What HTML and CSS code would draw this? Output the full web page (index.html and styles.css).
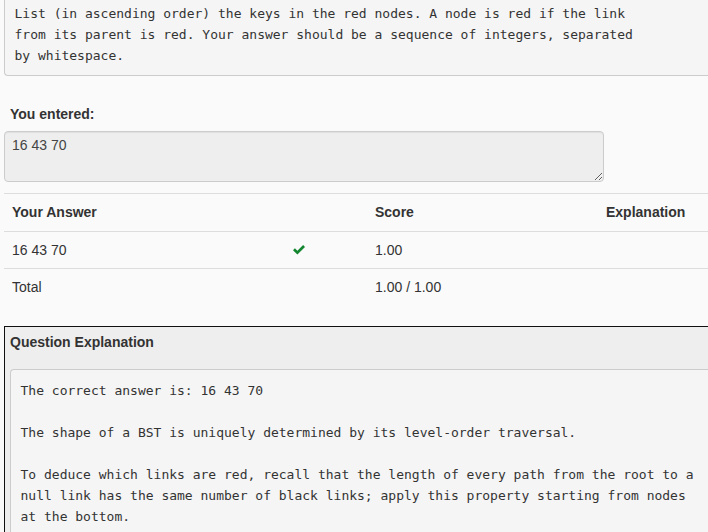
FILE: index.html
```html
<!DOCTYPE html>
<html>
<head>
<meta charset="utf-8">
<link rel="stylesheet" href="styles.css">
</head>
<body>
<div class="page">
<pre class="prompt">List (in ascending order) the keys in the red nodes. A node is red if the link
from its parent is red. Your answer should be a sequence of integers, separated
by whitespace.</pre>

<div class="entered">
  <label class="entered-label">You entered:</label>
  <textarea class="entered-box" readonly>16 43 70</textarea>
</div>

<table class="results">
  <colgroup>
    <col class="c-answer">
    <col class="c-mark">
    <col class="c-score">
    <col class="c-expl">
  </colgroup>
  <thead>
    <tr><th>Your Answer</th><th></th><th>Score</th><th>Explanation</th></tr>
  </thead>
  <tbody>
    <tr>
      <td>16 43 70</td>
      <td><svg class="check" width="12" height="10" viewBox="0 0 12 10"><polygon points="0,5.2 1.9,3.3 4.4,5.8 10.1,0.1 12,2 4.4,9.6" fill="#14862f"/></svg></td>
      <td>1.00</td>
      <td></td>
    </tr>
    <tr>
      <td>Total</td>
      <td></td>
      <td>1.00 / 1.00</td>
      <td></td>
    </tr>
  </tbody>
</table>

<div class="explain">
  <div class="explain-head">Question Explanation</div>
  <pre class="explain-body">The correct answer is: 16 43 70

The shape of a BST is uniquely determined by its level-order traversal.

To deduce which links are red, recall that the length of every path from the root to a
null link has the same number of black links; apply this property starting from nodes
at the bottom.</pre>
</div>
</div>
</body>
</html>
```

FILE: styles.css
```css
html, body {
  margin: 0;
  padding: 0;
  background: #fafafa;
  overflow: hidden;
}

body {
  width: 708px;
  height: 532px;
  font-family: "Liberation Sans", Arial, sans-serif;
  font-size: 14px;
  line-height: 20px;
  color: #333;
}

.page {
  padding-left: 4px;
}

.prompt {
  margin: -8px 0 0 0;
  padding: 9.5px;
  background: #f5f5f5;
  border: 1px solid #ccc;
  border-right: none;
  border-radius: 0 0 0 4px;
  font-family: "DejaVu Sans Mono", monospace;
  font-size: 13px;
  line-height: 21px;
  color: #333;
  white-space: pre;
  overflow: hidden;
}

.entered {
  display: flex;
  flex-direction: column;
  margin-top: 28px;
}

.entered-label {
  font-weight: bold;
  padding-left: 6px;
  margin-bottom: 7px;
}

.entered-box {
  box-sizing: border-box;
  width: 600px;
  height: 51px;
  margin: 0;
  padding: 3px 7px;
  border: 1px solid #ccc;
  border-radius: 4px;
  background: #eee;
  color: #444;
  font-family: "Liberation Sans", Arial, sans-serif;
  font-size: 14px;
  line-height: 20px;
  resize: vertical;
  box-shadow: inset 0 1px 1px rgba(0,0,0,0.06);
  outline: none;
}

.results {
  margin-top: 11px;
  border-collapse: collapse;
  table-layout: fixed;
  width: 704px;
}

.c-answer { width: 281px; }
.c-mark { width: 82px; }
.c-score { width: 231px; }
.c-expl { width: 110px; }

.results th,
.results td {
  padding: 8px;
  text-align: left;
  border-top: 1px solid #ddd;
  vertical-align: top;
  line-height: 20px;
  white-space: nowrap;
}

.results th {
  font-weight: bold;
  padding-bottom: 9px;
}

.check {
  display: block;
  margin-top: 5px;
}

.explain {
  margin-top: 21px;
  border-top: 1px solid #111;
  border-left: 1px solid #111;
  background: #eee;
}

.explain-head {
  padding: 5px 5px 5px;
  font-weight: bold;
}

.explain-body {
  margin: 12px 0 0 5px;
  padding: 9.5px;
  background: #f5f5f5;
  border: 1px solid #ccc;
  border-right: none;
  border-radius: 4px 0 0 4px;
  font-family: "DejaVu Sans Mono", monospace;
  font-size: 13px;
  line-height: 21px;
  color: #333;
  white-space: pre;
  overflow: hidden;
}
```
